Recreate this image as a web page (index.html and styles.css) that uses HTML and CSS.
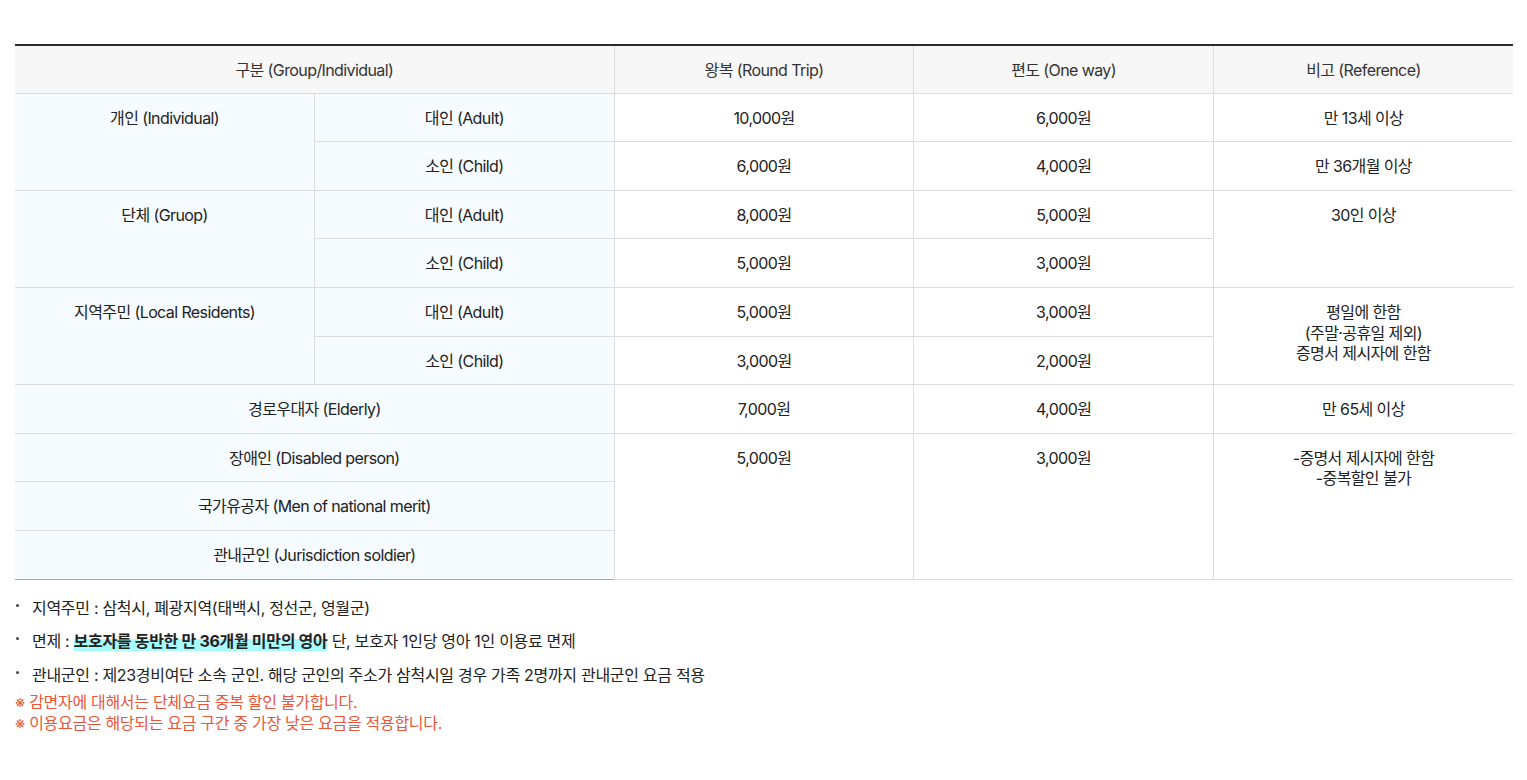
FILE: index.html
```html
<!DOCTYPE html>
<html lang="ko">
<head>
<meta charset="utf-8">
<link rel="stylesheet" href="styles.css">
</head>
<body>
<div class="wrap">
  <table class="fare">
    <colgroup>
      <col class="c"><col class="c"><col class="c"><col class="c"><col class="c">
    </colgroup>
    <thead>
      <tr>
        <th colspan="2">구분 (Group/Individual)</th>
        <th>왕복 (Round Trip)</th>
        <th>편도 (One way)</th>
        <th class="last">비고 (Reference)</th>
      </tr>
    </thead>
    <tbody>
      <tr>
        <td rowspan="2" class="sub">개인 (Individual)</td>
        <td class="sub">대인 (Adult)</td>
        <td>10,000원</td>
        <td>6,000원</td>
        <td class="last">만 13세 이상</td>
      </tr>
      <tr>
        <td class="sub">소인 (Child)</td>
        <td>6,000원</td>
        <td>4,000원</td>
        <td class="last">만 36개월 이상</td>
      </tr>
      <tr>
        <td rowspan="2" class="sub">단체 (Gruop)</td>
        <td class="sub">대인 (Adult)</td>
        <td>8,000원</td>
        <td>5,000원</td>
        <td rowspan="2" class="last">30인 이상</td>
      </tr>
      <tr>
        <td class="sub">소인 (Child)</td>
        <td>5,000원</td>
        <td>3,000원</td>
      </tr>
      <tr>
        <td rowspan="2" class="sub">지역주민 (Local Residents)</td>
        <td class="sub">대인 (Adult)</td>
        <td>5,000원</td>
        <td>3,000원</td>
        <td rowspan="2" class="last">평일에 한함<br>(주말·공휴일 제외)<br>증명서 제시자에 한함</td>
      </tr>
      <tr>
        <td class="sub">소인 (Child)</td>
        <td>3,000원</td>
        <td>2,000원</td>
      </tr>
      <tr>
        <td colspan="2" class="sub">경로우대자 (Elderly)</td>
        <td>7,000원</td>
        <td>4,000원</td>
        <td class="last">만 65세 이상</td>
      </tr>
      <tr>
        <td colspan="2" class="sub">장애인 (Disabled person)</td>
        <td rowspan="3">5,000원</td>
        <td rowspan="3">3,000원</td>
        <td rowspan="3" class="last">-증명서 제시자에 한함<br>-중복할인 불가</td>
      </tr>
      <tr>
        <td colspan="2" class="sub">국가유공자 (Men of national merit)</td>
      </tr>
      <tr class="end">
        <td colspan="2" class="sub">관내군인 (Jurisdiction soldier)</td>
      </tr>
    </tbody>
  </table>

  <ul class="notes">
    <li>지역주민 : 삼척시, 폐광지역(태백시, 정선군, 영월군)</li>
    <li>면제 : <strong class="hl">보호자를 동반한 만 36개월 미만의 영아</strong> 단, 보호자 1인당 영아 1인 이용료 면제</li>
    <li>관내군인 : 제23경비여단 소속 군인. 해당 군인의 주소가 삼척시일 경우 가족 2명까지 관내군인 요금 적용</li>
  </ul>
  <p class="warn">※ 감면자에 대해서는 단체요금 중복 할인 불가합니다.</p>
  <p class="warn">※ 이용요금은 해당되는 요금 구간 중 가장 낮은 요금을 적용합니다.</p>
</div>
</body>
</html>
```

FILE: styles.css
```css
* { box-sizing: border-box; }
html, body { margin: 0; padding: 0; background: #fff; }
body {
  font-family: "Inter", "Noto Sans CJK KR", "Noto Sans", sans-serif;
  color: #222;
  font-size: 16px;
  letter-spacing: -0.3px;
}
.wrap {
  padding: 44px 14px 0 15px;
}
.fare {
  width: 1498px;
  border-collapse: collapse;
  table-layout: fixed;
  border-top: 2px solid #2b2b2b;
  border-bottom: 1px solid #a9a9a9;
}
.fare col.c { width: 299.6px; }
.fare th,
.fare td {
  padding: 14px 10px 13px;
  line-height: 20.6px;
  font-size: 16px;
  letter-spacing: -0.6px;
  text-align: center;
  vertical-align: top;
  font-weight: 400;
  border-bottom: 1px solid #dcdcdc;
  border-right: 1px solid #dcdcdc;
  color: #222;
}
.fare th {
  background: #f7f7f7;
  color: #333;
  padding-top: 14px;
  padding-bottom: 12px;
}
.fare .last { border-right: none; }
.fare td.sub { background: #f5fbff; }
.fare tr.end td { border-bottom: none; }

.notes {
  list-style: none;
  margin: 17px 0 0;
  padding: 0;
}
.notes li {
  position: relative;
  padding-left: 17px;
  line-height: 22px;
  margin-bottom: 11.5px;
  color: #222;
}
.notes li:last-child { margin-bottom: 6px; }
.notes li::before {
  content: "";
  position: absolute;
  left: 1px;
  top: 7px;
  width: 3px;
  height: 3px;
  border-radius: 50%;
  background: #444;
}
.hl {
  font-weight: 700;
  background: linear-gradient(to bottom, transparent 40%, #a8fbff 40%);
}
.warn {
  margin: 0;
  color: #e9573b;
  line-height: 21px;
}
```
